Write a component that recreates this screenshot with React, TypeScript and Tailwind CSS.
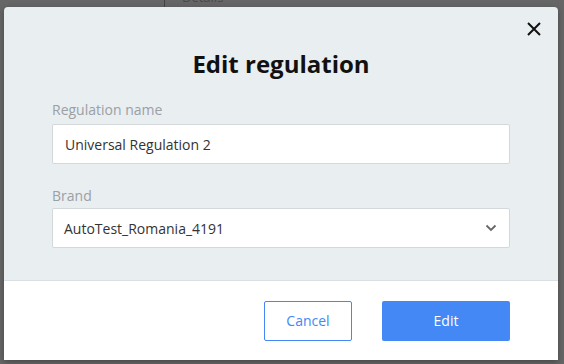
import React from "react";

export default function App() {
  return (
    <div className="relative w-[564px] h-[364px] overflow-hidden bg-[#666666]" style={{ fontFamily: '"Open Sans", sans-serif' }}>
      <div className="absolute left-[164px] top-0 h-[8px] w-px bg-[#444]" />
      <div className="absolute left-[182px] top-[-12px] text-[13px] text-[#4a4a4a]">Details</div>
      <div className="absolute left-[4px] top-[7px] w-[554px] h-[353px] rounded-t-[4px] bg-[#e9eef1] flex flex-col shadow-[0_2px_6px_rgba(0,0,0,0.3)]">
        <button className="absolute right-[17px] top-[15px] w-[14px] h-[14px] flex items-center justify-center text-[#111]">
          <svg width="14" height="14" viewBox="0 0 14 14" fill="none" stroke="currentColor" strokeWidth="2">
            <path d="M1 1L13 13M13 1L1 13" />
          </svg>
        </button>
        <div className="flex-1 px-[48px]">
          <h1 className="text-center text-[24px] font-bold text-[#111] mt-[41px] leading-[32px]">Edit regulation</h1>
          <div className="mt-[20px] text-[14px] text-[#9aa0a4] leading-[20px]">Regulation name</div>
          <div className="mt-[4px] h-[40px] bg-white border border-[#d3d8db] rounded-[2px] flex items-center pl-[12px] text-[14px] text-[#333]">
            Universal Regulation 2
          </div>
          <div className="mt-[22px] text-[14px] text-[#9aa0a4] leading-[20px]">Brand</div>
          <div className="mt-[2px] h-[40px] bg-white border border-[#d3d8db] rounded-[2px] flex items-center justify-between pl-[11px] pr-[12px] text-[14px] text-[#333]">
            <span>AutoTest_Romania_4191</span>
            <svg width="12" height="8" viewBox="0 0 12 8" fill="none" stroke="#666" strokeWidth="1.8">
              <path d="M1.5 1.5L6 6L10.5 1.5" />
            </svg>
          </div>
        </div>
        <div className="h-[80px] bg-white border-t border-[#dcdfe1] flex items-center justify-end gap-[30px] pr-[48px]">
          <button className="w-[88px] h-[40px] border border-[#4488f5] rounded-[2px] text-[#4488f5] text-[14px] bg-white">Cancel</button>
          <button className="w-[128px] h-[40px] rounded-[2px] bg-[#4488f5] text-white text-[14px]">Edit</button>
        </div>
      </div>
    </div>
  );
}
